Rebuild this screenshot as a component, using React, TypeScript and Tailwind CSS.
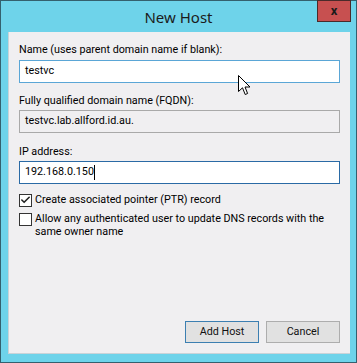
import { Check } from 'lucide-react'

const titleFont = { fontFamily: '"Noto Sans", "Open Sans", sans-serif' }

function Cursor() {
  return (
    <svg
      className="absolute left-[237px] top-[74px]"
      width="13"
      height="21"
      viewBox="0 0 13 21"
    >
      <path
        d="M0.5 0.5 L0.5 16.5 L4.5 12.8 L7.2 19.5 L9.6 18.5 L7 12 L12 12 Z"
        fill="#ffffff"
        stroke="#000000"
        strokeWidth="1"
      />
    </svg>
  )
}

export default function App() {
  return (
    <div className="relative w-[357px] h-[363px] bg-[#6ed3ea] border border-[#34606e] flex flex-col text-[10.75px] text-[#000] font-['Roboto',sans-serif]">
      {/* title bar */}
      <div className="relative h-[31px] flex items-center justify-center">
        <span className="text-[15px] text-[#1b1b1b] leading-none mt-[2px]" style={titleFont}>
          New Host
        </span>
        <div className="absolute right-[5px] -top-px w-[34px] h-[22px] bg-[#c75050] border border-[#4a2a2a] flex items-center justify-center">
          <span className="text-[13px] font-bold text-[#1a1a1a] leading-none -mt-[1px]">x</span>
        </div>
      </div>

      {/* client area */}
      <div className="flex-1 ml-[7px] mr-[6px] mb-[8px] bg-[#f0eff1] border-l border-b border-[#c9d3d8] pl-[10px] pr-[10px] pt-[10px] pb-[10px] flex flex-col">
        <div className="leading-[16px]">Name (uses parent domain name if blank):</div>
        <div className="mt-[2px] h-[23px] bg-white border border-[#5aa6d6] flex items-center px-[5px]">
          testvc
        </div>

        <div className="mt-[10px] leading-[16px]">Fully qualified domain name (FQDN):</div>
        <div className="mt-[1px] h-[23px] bg-[#f0eff1] border border-[#a9a9a9] flex items-center px-[5px]">
          testvc.lab.allford.id.au.
        </div>

        <div className="mt-[11px] leading-[16px]">IP address:</div>
        <div className="mt-[1px] h-[23px] bg-white border border-[#2a6aa5] flex items-center px-[5px]">
          <span>192.168.0.150</span>
          <span className="w-px h-[15px] bg-black" />
        </div>

        <label className="mt-[8px] flex items-center gap-[3px] leading-[16px]">
          <span className="w-[13px] h-[13px] bg-white border border-[#333] flex items-center justify-center">
            <Check size={12} strokeWidth={3.5} color="#222" />
          </span>
          Create associated pointer (PTR) record
        </label>

        <label className="mt-[4px] flex items-start gap-[3px] leading-[13px]">
          <span className="mt-[1px] shrink-0 w-[13px] h-[13px] bg-white border border-[#333]" />
          <span className="whitespace-nowrap">
            Allow any authenticated user to update DNS records with the
            <br />
            same owner name
          </span>
        </label>

        <div className="mt-auto flex justify-end gap-[7px]">
          <button className="w-[74px] h-[22px] bg-[#e1e1e1] border border-[#3c7fb1] text-[10.75px] text-[#111]">
            Add Host
          </button>
          <button className="w-[74px] h-[22px] bg-[#e1e1e1] border border-[#adadad] text-[10.75px] text-[#111]">
            Cancel
          </button>
        </div>
      </div>

      <Cursor />
    </div>
  )
}
